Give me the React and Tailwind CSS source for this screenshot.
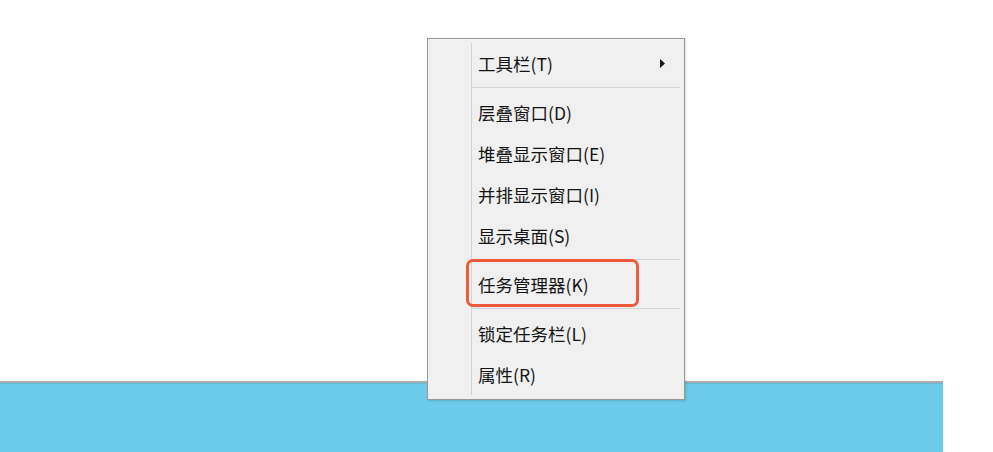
import React from "react";

const font = { fontFamily: '"Noto Sans CJK SC", "Microsoft YaHei", sans-serif' };

function Item({ label, arrow }) {
  return (
    <div className="h-[41px] flex items-center pl-[6px] pr-[14px] text-[17.5px] text-[#141414] leading-none">
      <span className="flex-1">{label}</span>
      {arrow && (
        <svg width="5" height="9" viewBox="0 0 5 9" className="mr-[1px]">
          <path d="M0 0 L5 4.5 L0 9 Z" fill="#1a1a1a" />
        </svg>
      )}
    </div>
  );
}

function Sep() {
  return (
    <div className="h-[8px] flex items-center">
      <div className="h-px w-full bg-[#d5d5d5] mt-[-1px]" />
    </div>
  );
}

export default function App() {
  return (
    <div className="relative w-[993px] h-[452px] bg-white overflow-hidden" style={font}>
      <div className="pt-[381px]">
        <div className="w-[943px] h-[71px] border-t-2 border-[#ababab] bg-[#6ccbe8]">
          <div className="h-px bg-[#5fbbd9]" />
        </div>
      </div>

      <div className="absolute left-[427px] top-[38px] w-[258px] h-[362px] border border-[#979797] bg-[#f0f0f0] flex py-[4px] shadow-[1px_1px_2px_rgba(0,0,0,0.15)]">
        <div className="w-[43px]" />
        <div className="flex-1 border-l border-[#d3d3d3] pr-[4px] flex flex-col">
          <Item label="工具栏(T)" arrow />
          <Sep />
          <Item label="层叠窗口(D)" />
          <Item label="堆叠显示窗口(E)" />
          <Item label="并排显示窗口(I)" />
          <Item label="显示桌面(S)" />
          <Sep />
          <Item label="任务管理器(K)" />
          <Sep />
          <Item label="锁定任务栏(L)" />
          <Item label="属性(R)" />
        </div>
      </div>

      <div className="absolute left-[466px] top-[259px] w-[173px] h-[48px] border-[3px] border-[#ee5b3a] rounded-[7px]" />
    </div>
  );
}
